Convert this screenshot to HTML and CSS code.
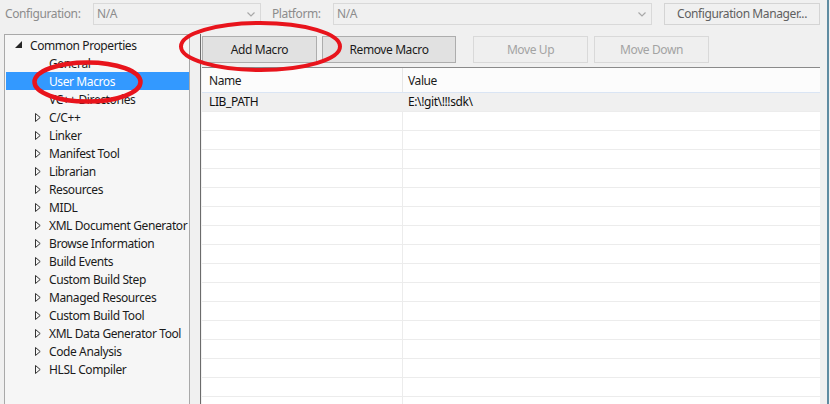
FILE: index.html
```html
<!DOCTYPE html>
<html>
<head>
<meta charset="utf-8">
<link rel="stylesheet" href="styles.css">
</head>
<body>
<div class="window">
  <div class="topbar">
    <span class="lbl lbl-cfg">Configuration:</span>
    <div class="combo combo-cfg"><span>N/A</span><svg class="chev" width="8" height="5" viewBox="0 0 8 5"><path d="M0.5 0.5 L4 4 L7.5 0.5" fill="none" stroke="#a8a8a8" stroke-width="1.2"/></svg></div>
    <span class="lbl lbl-plat">Platform:</span>
    <div class="combo combo-plat"><span>N/A</span><svg class="chev" width="8" height="5" viewBox="0 0 8 5"><path d="M0.5 0.5 L4 4 L7.5 0.5" fill="none" stroke="#a8a8a8" stroke-width="1.2"/></svg></div>
    <div class="btn btn-cfgmgr">Configuration Manager...</div>
  </div>
  <div class="main">
    <div class="tree">
      <div class="node lvl0"><span class="exp"><svg width="7" height="7" viewBox="0 0 7 7"><path d="M7 0 L7 7 L0 7 Z" fill="#262626"/></svg></span><span>Common Properties</span></div>
      <div class="node lvl1"><span class="exp"></span><span>General</span></div>
      <div class="node lvl1 sel"><span class="exp"></span><span>User Macros</span></div>
      <div class="node lvl1"><span class="exp"></span><span>VC++ Directories</span></div>
      <div class="node lvl1"><span class="exp"><svg class="tri" width="6" height="9" viewBox="0 0 6 9"><path d="M0.5 0.5 L5.2 4.5 L0.5 8.5 Z" fill="none" stroke="#333"/></svg></span><span>C/C++</span></div>
      <div class="node lvl1"><span class="exp"><svg class="tri" width="6" height="9" viewBox="0 0 6 9"><path d="M0.5 0.5 L5.2 4.5 L0.5 8.5 Z" fill="none" stroke="#333"/></svg></span><span>Linker</span></div>
      <div class="node lvl1"><span class="exp"><svg class="tri" width="6" height="9" viewBox="0 0 6 9"><path d="M0.5 0.5 L5.2 4.5 L0.5 8.5 Z" fill="none" stroke="#333"/></svg></span><span>Manifest Tool</span></div>
      <div class="node lvl1"><span class="exp"><svg class="tri" width="6" height="9" viewBox="0 0 6 9"><path d="M0.5 0.5 L5.2 4.5 L0.5 8.5 Z" fill="none" stroke="#333"/></svg></span><span>Librarian</span></div>
      <div class="node lvl1"><span class="exp"><svg class="tri" width="6" height="9" viewBox="0 0 6 9"><path d="M0.5 0.5 L5.2 4.5 L0.5 8.5 Z" fill="none" stroke="#333"/></svg></span><span>Resources</span></div>
      <div class="node lvl1"><span class="exp"><svg class="tri" width="6" height="9" viewBox="0 0 6 9"><path d="M0.5 0.5 L5.2 4.5 L0.5 8.5 Z" fill="none" stroke="#333"/></svg></span><span>MIDL</span></div>
      <div class="node lvl1"><span class="exp"><svg class="tri" width="6" height="9" viewBox="0 0 6 9"><path d="M0.5 0.5 L5.2 4.5 L0.5 8.5 Z" fill="none" stroke="#333"/></svg></span><span>XML Document Generator</span></div>
      <div class="node lvl1"><span class="exp"><svg class="tri" width="6" height="9" viewBox="0 0 6 9"><path d="M0.5 0.5 L5.2 4.5 L0.5 8.5 Z" fill="none" stroke="#333"/></svg></span><span>Browse Information</span></div>
      <div class="node lvl1"><span class="exp"><svg class="tri" width="6" height="9" viewBox="0 0 6 9"><path d="M0.5 0.5 L5.2 4.5 L0.5 8.5 Z" fill="none" stroke="#333"/></svg></span><span>Build Events</span></div>
      <div class="node lvl1"><span class="exp"><svg class="tri" width="6" height="9" viewBox="0 0 6 9"><path d="M0.5 0.5 L5.2 4.5 L0.5 8.5 Z" fill="none" stroke="#333"/></svg></span><span>Custom Build Step</span></div>
      <div class="node lvl1"><span class="exp"><svg class="tri" width="6" height="9" viewBox="0 0 6 9"><path d="M0.5 0.5 L5.2 4.5 L0.5 8.5 Z" fill="none" stroke="#333"/></svg></span><span>Managed Resources</span></div>
      <div class="node lvl1"><span class="exp"><svg class="tri" width="6" height="9" viewBox="0 0 6 9"><path d="M0.5 0.5 L5.2 4.5 L0.5 8.5 Z" fill="none" stroke="#333"/></svg></span><span>Custom Build Tool</span></div>
      <div class="node lvl1"><span class="exp"><svg class="tri" width="6" height="9" viewBox="0 0 6 9"><path d="M0.5 0.5 L5.2 4.5 L0.5 8.5 Z" fill="none" stroke="#333"/></svg></span><span>XML Data Generator Tool</span></div>
      <div class="node lvl1"><span class="exp"><svg class="tri" width="6" height="9" viewBox="0 0 6 9"><path d="M0.5 0.5 L5.2 4.5 L0.5 8.5 Z" fill="none" stroke="#333"/></svg></span><span>Code Analysis</span></div>
      <div class="node lvl1"><span class="exp"><svg class="tri" width="6" height="9" viewBox="0 0 6 9"><path d="M0.5 0.5 L5.2 4.5 L0.5 8.5 Z" fill="none" stroke="#333"/></svg></span><span>HLSL Compiler</span></div>
    </div>
    <div class="page">
      <div class="toolbar">
        <div class="btn btn-add">Add Macro</div>
        <div class="btn btn-remove">Remove Macro</div>
        <div class="btn btn-dis btn-up">Move Up</div>
        <div class="btn btn-dis btn-down">Move Down</div>
      </div>
      <div class="grid">
        <div class="ghead"><div class="c1">Name</div><div class="c2">Value</div></div>
        <div class="grow gsel"><div class="c1">LIB_PATH</div><div class="c2">E:\!git\!!!sdk\</div></div>
        <div class="grow"><div class="c1"></div><div class="c2"></div></div>
        <div class="grow"><div class="c1"></div><div class="c2"></div></div>
        <div class="grow"><div class="c1"></div><div class="c2"></div></div>
        <div class="grow"><div class="c1"></div><div class="c2"></div></div>
        <div class="grow"><div class="c1"></div><div class="c2"></div></div>
        <div class="grow"><div class="c1"></div><div class="c2"></div></div>
        <div class="grow"><div class="c1"></div><div class="c2"></div></div>
        <div class="grow"><div class="c1"></div><div class="c2"></div></div>
        <div class="grow"><div class="c1"></div><div class="c2"></div></div>
        <div class="grow"><div class="c1"></div><div class="c2"></div></div>
        <div class="grow"><div class="c1"></div><div class="c2"></div></div>
        <div class="grow"><div class="c1"></div><div class="c2"></div></div>
        <div class="grow"><div class="c1"></div><div class="c2"></div></div>
        <div class="grow"><div class="c1"></div><div class="c2"></div></div>
        <div class="grow"><div class="c1"></div><div class="c2"></div></div>
        <div class="grow"><div class="c1"></div><div class="c2"></div></div>
      </div>
    </div>
  </div>
  <svg class="annot" width="830" height="404" viewBox="0 0 830 404">
    <ellipse cx="260.5" cy="46.5" rx="79.5" ry="23.5" fill="none" stroke="#e8141c" stroke-width="4"/>
    <ellipse cx="87.5" cy="82" rx="53" ry="19.5" fill="none" stroke="#e8141c" stroke-width="4.5"/>
  </svg>
</div>
</body>
</html>
```

FILE: styles.css
```css
* { box-sizing: border-box; }
html, body { margin: 0; padding: 0; }
body {
  width: 830px;
  height: 404px;
  overflow: hidden;
  background: #f0f0f0;
  font-family: "Noto Sans", "Open Sans", sans-serif;
  font-size: 12px;
  letter-spacing: -0.4px;
  color: #1b1b1b;
}
.window {
  position: relative;
  width: 829px;
  height: 404px;
  border-right: 2px solid #5f8ca2;
  overflow: hidden;
}
.topbar {
  display: flex;
  align-items: flex-start;
  height: 34px;
  padding-top: 3px;
}
.lbl {
  height: 22px;
  line-height: 21px;
  color: #8c8c8c;
  white-space: nowrap;
}
.lbl-cfg { width: 93px; padding-left: 5px; }
.lbl-plat { width: 61px; margin-left: 11px; }
.combo {
  display: flex;
  align-items: center;
  justify-content: space-between;
  height: 22px;
  border: 1px solid #d9d9d9;
  background: #f0f0f0;
  color: #8c8c8c;
  padding: 0 5px 1px 3px;
}
.combo-cfg { width: 168px; }
.combo-plat { width: 319px; }
.chev { margin-top: 2px; }
.btn {
  display: flex;
  align-items: center;
  justify-content: center;
  border: 1px solid #adadad;
  background: #e1e1e1;
  color: #1b1b1b;
  white-space: nowrap;
}
.btn-cfgmgr {
  width: 156px;
  height: 22px;
  margin-left: 12px;
  padding-bottom: 1px;
  border-color: #d4d4d4;
  background: #f0f0f0;
  color: #606060;
}
.main {
  display: flex;
  align-items: flex-start;
}
.tree {
  margin-left: 4px;
  width: 186px;
  height: 390px;
  border: 1px solid #a9a9a9;
  background: #f6f6f6;
  padding: 1px 0 0 1px;
}
.node {
  display: flex;
  align-items: center;
  height: 18px;
  white-space: nowrap;
}
.node .exp {
  display: flex;
  align-items: center;
  width: 16px;
  height: 18px;
  flex: none;
}
.lvl0 { padding-left: 8px; }
.lvl0 .exp svg { margin-left: 1px; margin-top: -1px; }
.lvl1 { padding-left: 27px; }
.lvl1 .exp svg { margin-left: 2px; margin-top: 1px; }
.node.sel { background: #3399ff; color: #fff; }
.page {
  margin-left: 10px;
  height: 380px;
  border-left: 1px solid #6b6b6b;
  padding: 2px 0 0 1px;
}
.toolbar {
  display: flex;
  height: 27px;
}
.toolbar .btn { height: 27px; }
.btn-add { width: 115px; }
.btn-remove { width: 134px; margin-left: 5px; }
.btn-up { width: 115px; margin-left: 17px; }
.btn-down { width: 115px; margin-left: 6px; }
.btn-dis {
  border-color: #d9d9d9;
  background: #efefef;
  color: #a3a3a3;
}
.grid {
  margin-top: 4px;
  width: 618px;
  border-top: 1px solid #8a8a8a;
}
.ghead {
  display: flex;
  height: 25px;
  background: #fcfcfc;
  border-bottom: 1px solid #dae5f4;
}
.ghead .c1, .ghead .c2 { line-height: 25px; }
.c1 {
  width: 201px;
  padding-left: 7px;
  border-right: 1px solid #e6e6e6;
  flex: none;
}
.c2 {
  flex: 1;
  padding-left: 5px;
}
.grow {
  display: flex;
  height: 19px;
  border-top: 1px solid #ececec;
  background: #fff;
}
.grow .c1 { border-right-color: #ececec; }
.grow.gsel {
  height: 18px;
  border-top: none;
  background: #f0f0f0;
  line-height: 18px;
  color: #111;
}
.grow.gsel .c1 { border-right-color: transparent; }
.annot {
  position: absolute;
  left: 0;
  top: 0;
  pointer-events: none;
}
```
